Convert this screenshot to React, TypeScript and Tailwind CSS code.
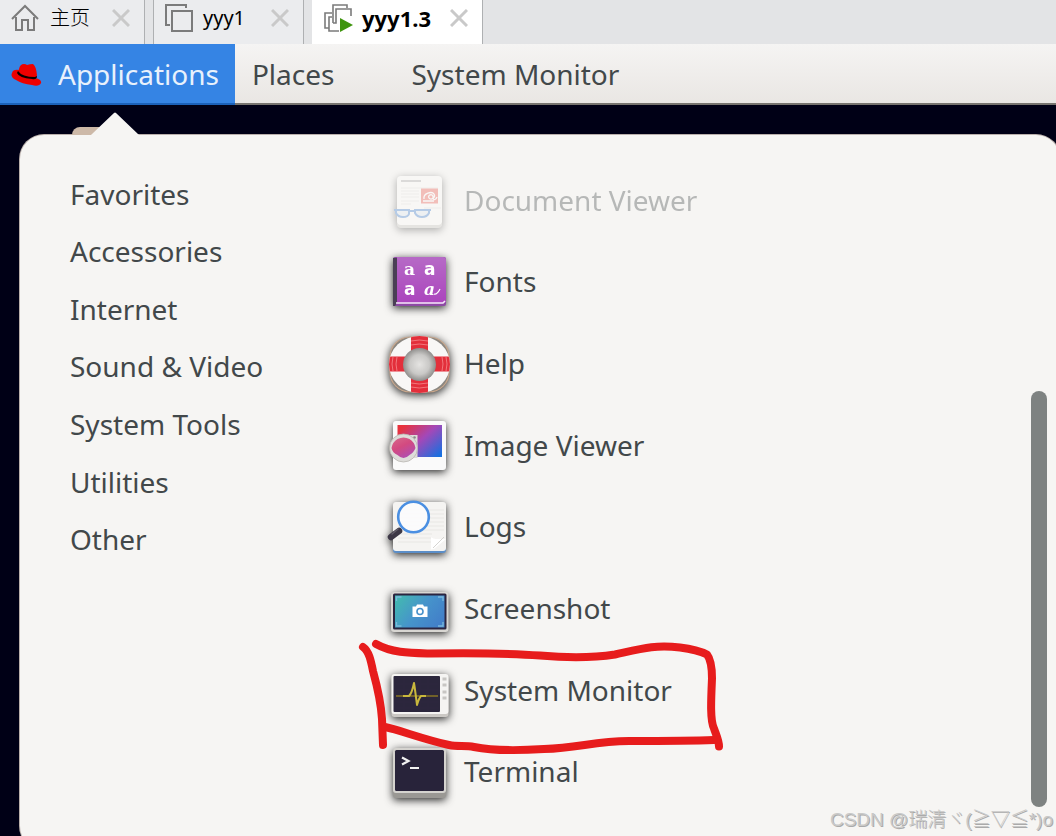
import { useState } from 'react';
import type { ReactNode } from 'react';

interface AppEntry {
  name: string;
  icon: ReactNode;
  faded?: boolean;
}

const CATEGORIES = [
  'Favorites',
  'Accessories',
  'Internet',
  'Sound & Video',
  'System Tools',
  'Utilities',
  'Other',
];

function Icon({ children }: { children: ReactNode }) {
  return (
    <svg
      viewBox="0 -1 64 64"
      className="size-16 shrink-0 overflow-visible drop-shadow-[0_2px_4px_rgba(0,0,0,0.85)]"
      aria-hidden="true"
    >
      {children}
    </svg>
  );
}

function DocumentIcon() {
  return (
    <Icon>
      <rect x="10" y="7" width="45" height="51" rx="4" fill="#fcfcfb" />
      <path d="M10 53v2a4 4 0 0 0 4 4h37a4 4 0 0 0 4-4v-2a4 4 0 0 1-4 3H14a4 4 0 0 1-4-3Z" fill="#c6c5c0" />
      <path d="M14 12h20" stroke="#aaa" strokeWidth="2" />
      <path d="M14 19h37M14 22h18M14 25h18M14 28h18M14 32h18M14 35h10M37 39h17" stroke="#e2e0dc" strokeWidth="1.2" />
      <rect x="34" y="19.500" width="17" height="15" fill="#ed5b50" />
      <path d="M37 30c-1-6 8-8 10-5s-3 7-5 4 4-5 4-1 3 3 4 0M36 32h11" fill="none" stroke="#fff" strokeWidth="1.3" />
      <g fill="#dfe7f1" stroke="#3f7fd0" strokeWidth="2">
        <path d="M9 41h13v4q-1 3-6 3t-7-4Z" />
        <path d="M28 41h14v3q-2 4-7 4t-7-4Z" />
        <path d="M22 42h6M7 41h3M41 41h3" />
      </g>
    </Icon>
  );
}

function FontsIcon() {
  return (
    <Icon>
      <rect x="6" y="7" width="53" height="49" rx="2" fill="#8e4aa5" />
      <path d="M10 7h46a3 3 0 0 1 3 3v40a3 3 0 0 1-3 3H10Z" fill="url(#fontsCover)" />
      <path d="M6 8h4v45l-2 3H6Z" fill="#4a3f55" />
      <path d="M9 53h47l2-2" fill="none" stroke="#f6e9fa" strokeWidth="1.6" />
      <defs>
        <linearGradient id="fontsCover" x1="0" y1="0" x2="0" y2="1">
          <stop offset="0" stopColor="#b66ac6" />
          <stop offset="1" stopColor="#ab45bd" />
        </linearGradient>
      </defs>
      <g fill="#fff" fontSize="17">
        <text x="17" y="25" fontFamily="DejaVu Serif, serif" fontWeight="700">a</text>
        <text x="37" y="25" fontFamily="DejaVu Sans, sans-serif" fontWeight="700">a</text>
        <text x="17" y="45" fontFamily="DejaVu Sans, sans-serif" fontWeight="700">a</text>
        <text x="37" y="45" fontFamily="DejaVu Serif, serif" fontStyle="italic" fontWeight="700">a</text>
      </g>
      <path d="M47 44q3 1 6-5" fill="none" stroke="#fff" strokeWidth="1.2" />
    </Icon>
  );
}

function HelpIcon() {
  return (
    <Icon>
      <defs>
        <radialGradient id="helpHole">
          <stop offset="0" stopColor="#e5e4e2" />
          <stop offset="0.6" stopColor="#c9c8c6" />
          <stop offset="1" stopColor="#8f8e8c" />
        </radialGradient>
        <clipPath id="helpRing">
          <ellipse cx="32.5" cy="32.5" rx="30.5" ry="28.5" />
        </clipPath>
      </defs>
      <rect x="3" y="5" width="59" height="55" rx="20" fill="#8b8781" stroke="#c9a78c" strokeWidth="1.2" />
      <g clipPath="url(#helpRing)">
        <rect x="1" y="2" width="63" height="60" fill="#f8f7f6" />
        <path d="M24 2h17v60H24ZM1 24.500h63v15H1Z" fill="#e32f3b" />
        <path d="M24 9q8-2 17 0M24 55q8 2 17 0M6 25q-2 7 0 14M59 25q2 7 0 14M24 13q8-2 17 0M24 51q8 2 17 0M10 25q-2 7 0 14M55 25q2 7 0 14" fill="none" stroke="#f2767c" strokeWidth="1" />
      </g>
      <circle cx="32.5" cy="32.5" r="16.500" fill="url(#helpHole)" />
    </Icon>
  );
}

function ImageIcon() {
  return (
    <Icon>
      <defs>
        <linearGradient id="photo" x1="0" y1="0.1" x2="1" y2="0.9">
          <stop offset="0.05" stopColor="#e8323c" />
          <stop offset="0.5" stopColor="#a348b8" />
          <stop offset="1" stopColor="#1670e0" />
        </linearGradient>
        <linearGradient id="loupe" x1="0" y1="0" x2="0.6" y2="1">
          <stop offset="0" stopColor="#d86a8c" />
          <stop offset="0.5" stopColor="#d34a80" />
          <stop offset="1" stopColor="#b04db0" />
        </linearGradient>
      </defs>
      <rect x="6" y="7" width="53" height="49" rx="3" fill="#fafafa" />
      <rect x="10.500" y="11" width="44.500" height="32" fill="url(#photo)" />
      <path d="M10 21h20.500v23H10Z" fill="#deddda" />
      <circle cx="27.500" cy="23.500" r="1.300" fill="#888" />
      <circle cx="16.500" cy="34" r="14" fill="#deddda" stroke="#b9b6b1" strokeWidth="0.8" />
      <path d="M4.500 34q1-6 6-9 6-3 12 0 5 3 6 9-2 5-6 7-6 6-12 0-5-2-6-7Z" fill="url(#loupe)" />
    </Icon>
  );
}

function LogsIcon() {
  return (
    <Icon>
      <rect x="6" y="9" width="53" height="49" rx="3" fill="#5b8ec8" />
      <rect x="6" y="7" width="53" height="49" rx="3" fill="#f5f4f2" />
      <path d="M11 15h46M11 19h46M11 23h46M11 27h46M11 31h46M11 35h46M11 39h34M11 43h34M11 47h34" stroke="#e8e7e4" strokeWidth="1" />
      <path d="M44 54.500V42q2 2 5 2h10L47 54Z" fill="#fff" />
      <path d="m46 53 11-11" stroke="#d5d4d1" strokeWidth="1" />
      <circle cx="26.500" cy="22" r="15.300" fill="#fbfbfc" fillOpacity="0.95" stroke="#4a8fe2" strokeWidth="2.600" />
      <path d="M12 36 4 42" stroke="#3d3846" strokeWidth="6.500" strokeLinecap="round" />
      <path d="m11 34-6 5" stroke="#625d69" strokeWidth="1.500" strokeLinecap="round" />
    </Icon>
  );
}

function ScreenshotIcon() {
  return (
    <Icon>
      <defs>
        <linearGradient id="shot" x1="0" y1="0.2" x2="1" y2="0.7">
          <stop offset="0" stopColor="#43b7b2" />
          <stop offset="0.5" stopColor="#4694cb" />
          <stop offset="1" stopColor="#427fc9" />
        </linearGradient>
      </defs>
      <rect x="4" y="15" width="57.500" height="40" rx="3" fill="#d8d6d2" />
      <rect x="6" y="16.500" width="53.500" height="36" rx="1.500" fill="#2b2540" />
      <rect x="8" y="18.500" width="49.500" height="32" fill="url(#shot)" />
      <path d="M9.500 24v-4h5M51 20h5v4M9.500 45v4h5M51 49h5v-4" fill="none" stroke="#79b9dc" strokeWidth="1.300" />
      <path d="M25.500 29.500h3.500l1-2h6l1 2h3.500v10.500h-15Z" fill="#fff" />
      <circle cx="33" cy="34.500" r="3" fill="none" stroke="#4791ca" strokeWidth="1.600" />
    </Icon>
  );
}

function MonitorIcon() {
  return (
    <Icon>
      <rect x="4.500" y="16" width="57" height="42" rx="3" fill="#cbc8c4" />
      <rect x="4.500" y="15" width="57" height="40" rx="3" fill="#f5f4f2" />
      <rect x="6.500" y="17" width="46.500" height="36" rx="1" fill="#2b263c" />
      <path d="M9 25h42M9 31h42M9 43h42M9 49h42M17 18v34M25 18v34M33 18v34M41 18v34" stroke="#2f2940" strokeWidth="0.7" />
      <path d="M9 37h42" stroke="#887423" strokeWidth="1.300" />
      <path d="M16 37h6q3-3 5-13 1 6 3 22 2-7 4-9h5" fill="none" stroke="#c9b83d" strokeWidth="2" strokeLinejoin="round" />
      <path d="M55.500 20h4M55.500 26h4M55.500 33h4M55.500 39h4" stroke="#c8c6c3" strokeWidth="3" />
    </Icon>
  );
}

function TerminalIcon() {
  return (
    <Icon>
      <rect x="6" y="9" width="53" height="49" rx="3" fill="#9a9894" />
      <rect x="6" y="8" width="53" height="45" rx="3" fill="#d5d3cf" />
      <rect x="8" y="10" width="49" height="41" rx="1.500" fill="#28233a" />
      <path d="m15 17.500 6.500 3.500-6.500 3.500" fill="none" stroke="#f2f2f2" strokeWidth="2.200" />
      <path d="M23 28h9" stroke="#f2f2f2" strokeWidth="2" />
    </Icon>
  );
}

const APPS: AppEntry[] = [
  { name: 'Document Viewer', icon: <DocumentIcon />, faded: true },
  { name: 'Fonts', icon: <FontsIcon /> },
  { name: 'Help', icon: <HelpIcon /> },
  { name: 'Image Viewer', icon: <ImageIcon /> },
  { name: 'Logs', icon: <LogsIcon /> },
  { name: 'Screenshot', icon: <ScreenshotIcon /> },
  { name: 'System Monitor', icon: <MonitorIcon /> },
  { name: 'Terminal', icon: <TerminalIcon /> },
];

function CloseButton({ label }: { label: string }) {
  return (
    <button aria-label={label} className="ml-auto">
      <svg viewBox="0 0 18 18" className="size-[18px]" fill="none" stroke="#c9c9c9" strokeWidth="3">
        <path d="m1 1 16 16M17 1 1 17" />
      </svg>
    </button>
  );
}

function HomeIcon() {
  return (
    <svg viewBox="0 0 28 28" className="size-7" fill="none" stroke="#7b7b7b" strokeWidth="2">
      <path d="M1 15 14 2l13 13M5 13v13h6V16h6v10h6V13" />
    </svg>
  );
}

function MachineIcon() {
  return (
    <svg viewBox="0 0 28 28" className="size-7" fill="none" stroke="#7b7b7b" strokeWidth="2">
      <path d="M5 21H1V1h20v3" />
      <rect x="7" y="7" width="20" height="20" />
    </svg>
  );
}

function RunningIcon() {
  return (
    <svg viewBox="0 0 30 28" className="h-7 w-[30px]">
      <g fill="none" stroke="#7b7b7b" strokeWidth="1.600">
        <path d="M5 24H1V9h7M15 27H5V13h3M9 19V1h14v3" />
        <path d="M9 19h3V5h15v7" />
      </g>
      <path d="m16 14 13 7-13 7Z" fill="#3f950e" />
    </svg>
  );
}

function HatIcon() {
  return (
    <svg viewBox="0 -1 32 24" className="h-6 w-8">
      <path d="M1 10q1-4 7-3l15 8q8 1 7 5-2 4-9 2Q11 21 5 17-1 14 1 10Z" fill="#ee0000" />
      <path d="M8 6q1-5 5-5 2 0 3 1 3-1 6-1 3 2 4 11 0 4-6 4Q10 15 7 9Z" fill="#ee0000" />
      <path d="M7 8q4 6 17 6l2-1q0 4-5 3Q8 15 6 10Z" fill="#090000" />
    </svg>
  );
}

export default function App() {
  const [category, setCategory] = useState('Utilities');

  return (
    <div className="relative flex h-screen flex-col overflow-hidden bg-[#000016] font-['Noto_Sans','Noto_Sans_CJK_SC',sans-serif] text-[#42484a]">
      {/* machine tabs */}
      <header className="flex h-11 shrink-0 gap-2 bg-[#e3e4e6] text-xl text-black">
        <div className="flex w-[145px] items-center border-r border-[#aeb0b2] bg-[#ebecee] pr-3.5 pb-2 pl-[11px]">
          <button className="flex items-center gap-[11px] font-light whitespace-nowrap">
            <HomeIcon />
            <span>主页</span>
          </button>
          <CloseButton label="Close 主页" />
        </div>
        <div className="flex w-[151px] items-center border-x border-[#aeb0b2] bg-[#ebecee] pr-3.5 pb-2 pl-[11px]">
          <button className="flex items-center gap-2.5">
            <MachineIcon />
            <span>yyy1</span>
          </button>
          <CloseButton label="Close yyy1" />
        </div>
        <div className="flex w-[171px] items-center border-r border-[#aeb0b2] bg-white pr-3.5 pb-2 pl-3">
          <button className="flex items-center gap-2 text-[22px] leading-6 font-bold">
            <RunningIcon />
            <span>yyy1.3</span>
          </button>
          <CloseButton label="Close yyy1.3" />
        </div>
      </header>

      {/* desktop top bar */}
      <nav className="flex h-[61px] shrink-0 items-stretch bg-linear-to-b from-[#f5f4f3] to-[#e9e6e3] text-[28px]">
        <button className="flex items-center gap-[15px] border-b-2 border-[#1b61b9] bg-[#3584e4] pr-4 pl-[11px] text-[#e8f1fc]">
          <HatIcon />
          Applications
        </button>
        <button className="border-b-2 border-[#77746f] pr-10 pl-[17px]">Places</button>
        <button className="grow border-b-2 border-[#77746f] pl-[37px] text-left">System Monitor</button>
      </nav>

      {/* applications menu */}
      <main className="relative -mr-1 -mb-3.5 ml-5 mt-[30px] flex grow rounded-3xl bg-[#f6f5f3] text-[28px] shadow-[0_0_0_1px_#b9afab]">
        <div className="absolute -top-2 left-[52px] h-2 w-10 rounded-tl-lg bg-[#cdb9a8]" />
        <svg viewBox="0 0 50 24" className="absolute -top-[23px] left-[70px] h-6 w-[50px]">
          <path d="M0 24 2 22 24 1q1-1 2 0l22 21 2 2Z" fill="#f6f5f3" />
        </svg>

        <ul className="mt-[30px] ml-[50px] grid h-[403px] w-[317px] shrink-0 auto-rows-fr">
          {CATEGORIES.map((c) => (
            <li key={c} className="flex items-center">
              <button onClick={() => setCategory(c)} aria-pressed={c === category}>
                {c}
              </button>
            </li>
          ))}
        </ul>

        <ul className="mt-6 grid h-[653px] grow auto-rows-fr">
          {APPS.map((app) => (
            <li key={app.name} className="flex items-center">
              <button className={`flex items-center gap-[13px] whitespace-nowrap ${app.faded ? 'opacity-35' : ''}`}>
                {app.icon}
                {app.name}
              </button>
            </li>
          ))}
        </ul>

        <div className="mt-64 mr-[13px] h-[416px] w-4 shrink-0 rounded-full bg-[#7e8281]" />
      </main>

      {/* hand-drawn marker */}
      <svg
        viewBox="0 0 380 120"
        className="pointer-events-none absolute top-[635px] left-[350px] h-[120px] w-[380px]"
        fill="none"
        stroke="#e71c1c"
        strokeWidth="8"
        strokeLinecap="round"
        strokeLinejoin="round"
      >
        <path d="M26 9C42 18 60 18 80 18.500c35-.5 70-1 110 2 35 3 55 2 75-1 27-6 40-10 65-7 16 2 23 5 27 7 4 5 5 15 5 24-1 22-2 42 2 50 2 6 5 12 5 18" />
        <path d="M13 12c6 4 8 14 10 24 6 22 8 32 9 48l1 26" />
        <path d="M35 92c15 3 37 12 64 18 9 2 16 0 25 2 20 4 40 4 70 2 35-1 50-8 85-8 30 0 60 0 85-1" />
      </svg>

      <p className="absolute right-[3px] bottom-0.5 font-['Liberation_Sans','Noto_Sans_CJK_SC',sans-serif] text-[19px] leading-7 font-light whitespace-nowrap text-[#c9c9c8] [text-shadow:1px_1px_0_#aaa]">
        CSDN @瑞清ヾ(≧▽≦*)o
      </p>
    </div>
  );
}
